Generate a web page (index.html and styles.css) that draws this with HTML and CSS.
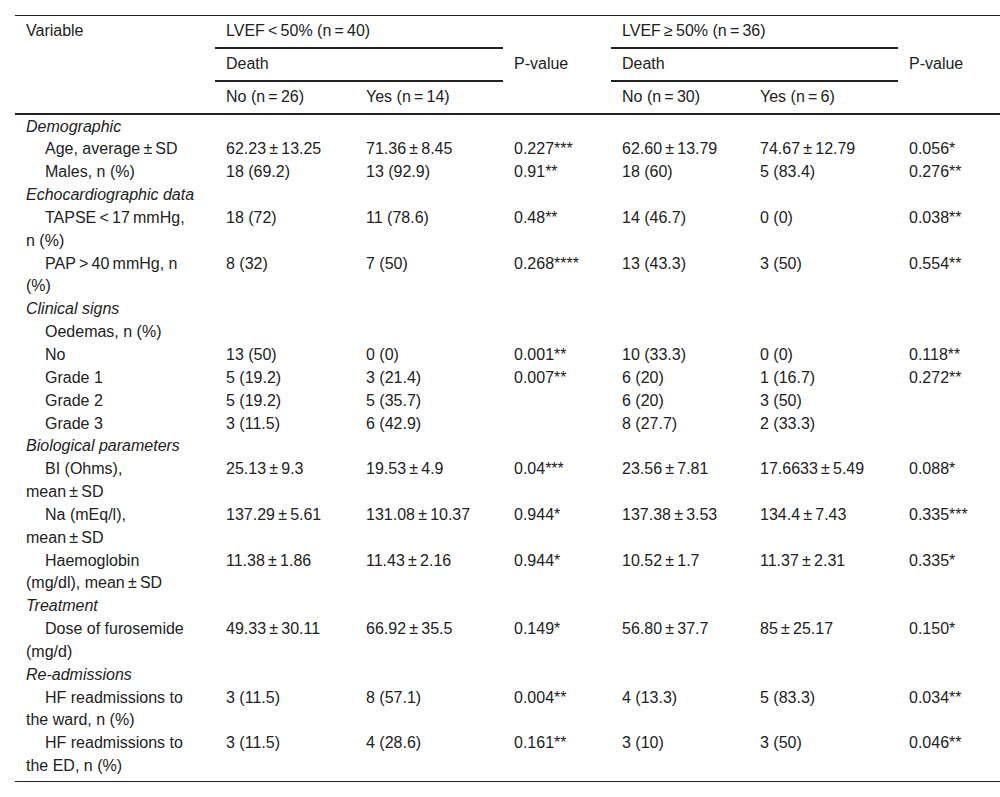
FILE: index.html
```html
<!DOCTYPE html>
<html lang="en">
<head>
<meta charset="utf-8">
<title>LVEF table</title>
<link rel="stylesheet" href="styles.css">
</head>
<body>
<div class="page">
<table class="data">
  <colgroup>
    <col class="c1"><col class="c2"><col class="c3"><col class="c4"><col class="c5"><col class="c6"><col class="c7">
  </colgroup>
  <thead>
    <tr>
      <th rowspan="3" class="var top">Variable</th>
      <th colspan="2" class="span">LVEF&thinsp;&lt;&thinsp;50% (n&thinsp;=&thinsp;40)</th>
      <th rowspan="3" class="pv">P-value</th>
      <th colspan="2" class="span">LVEF&thinsp;≥&thinsp;50% (n&thinsp;=&thinsp;36)</th>
      <th rowspan="3" class="pv">P-value</th>
    </tr>
    <tr>
      <th colspan="2" class="span">Death</th>
      <th colspan="2" class="span">Death</th>
    </tr>
    <tr class="last">
      <th>No (n&thinsp;=&thinsp;26)</th>
      <th>Yes (n&thinsp;=&thinsp;14)</th>
      <th>No (n&thinsp;=&thinsp;30)</th>
      <th>Yes (n&thinsp;=&thinsp;6)</th>
    </tr>
  </thead>
  <tbody>
    <tr><td colspan="7" class="cat">Demographic</td></tr>
    <tr><td class="var sub">Age, average&thinsp;±&thinsp;SD</td><td>62.23&thinsp;±&thinsp;13.25</td><td>71.36&thinsp;±&thinsp;8.45</td><td>0.227***</td><td>62.60&thinsp;±&thinsp;13.79</td><td>74.67&thinsp;±&thinsp;12.79</td><td>0.056*</td></tr>
    <tr><td class="var sub">Males, n (%)</td><td>18 (69.2)</td><td>13 (92.9)</td><td>0.91**</td><td>18 (60)</td><td>5 (83.4)</td><td>0.276**</td></tr>
    <tr><td colspan="7" class="cat">Echocardiographic data</td></tr>
    <tr><td class="var sub">TAPSE&thinsp;&lt;&thinsp;17&thinsp;mmHg, n (%)</td><td>18 (72)</td><td>11 (78.6)</td><td>0.48**</td><td>14 (46.7)</td><td>0 (0)</td><td>0.038**</td></tr>
    <tr><td class="var sub">PAP&thinsp;&gt;&thinsp;40&thinsp;mmHg, n (%)</td><td>8 (32)</td><td>7 (50)</td><td>0.268****</td><td>13 (43.3)</td><td>3 (50)</td><td>0.554**</td></tr>
    <tr><td colspan="7" class="cat">Clinical signs</td></tr>
    <tr><td class="var sub">Oedemas, n (%)</td><td></td><td></td><td></td><td></td><td></td><td></td></tr>
    <tr><td class="var sub">No</td><td>13 (50)</td><td>0 (0)</td><td>0.001**</td><td>10 (33.3)</td><td>0 (0)</td><td>0.118**</td></tr>
    <tr><td class="var sub">Grade 1</td><td>5 (19.2)</td><td>3 (21.4)</td><td>0.007**</td><td>6 (20)</td><td>1 (16.7)</td><td>0.272**</td></tr>
    <tr><td class="var sub">Grade 2</td><td>5 (19.2)</td><td>5 (35.7)</td><td></td><td>6 (20)</td><td>3 (50)</td><td></td></tr>
    <tr><td class="var sub">Grade 3</td><td>3 (11.5)</td><td>6 (42.9)</td><td></td><td>8 (27.7)</td><td>2 (33.3)</td><td></td></tr>
    <tr><td colspan="7" class="cat">Biological parameters</td></tr>
    <tr><td class="var sub">BI (Ohms), <span class="nw">mean&thinsp;±&thinsp;SD</span></td><td>25.13&thinsp;±&thinsp;9.3</td><td>19.53&thinsp;±&thinsp;4.9</td><td>0.04***</td><td>23.56&thinsp;±&thinsp;7.81</td><td>17.6633&thinsp;±&thinsp;5.49</td><td>0.088*</td></tr>
    <tr><td class="var sub">Na (mEq/l), <span class="nw">mean&thinsp;±&thinsp;SD</span></td><td>137.29&thinsp;±&thinsp;5.61</td><td>131.08&thinsp;±&thinsp;10.37</td><td>0.944*</td><td>137.38&thinsp;±&thinsp;3.53</td><td>134.4&thinsp;±&thinsp;7.43</td><td>0.335***</td></tr>
    <tr><td class="var sub">Haemoglobin <span class="nw">(mg/dl), mean&thinsp;±&thinsp;SD</span></td><td>11.38&thinsp;±&thinsp;1.86</td><td>11.43&thinsp;±&thinsp;2.16</td><td>0.944*</td><td>10.52&thinsp;±&thinsp;1.7</td><td>11.37&thinsp;±&thinsp;2.31</td><td>0.335*</td></tr>
    <tr><td colspan="7" class="cat">Treatment</td></tr>
    <tr><td class="var sub">Dose of furosemide (mg/d)</td><td>49.33&thinsp;±&thinsp;30.11</td><td>66.92&thinsp;±&thinsp;35.5</td><td>0.149*</td><td>56.80&thinsp;±&thinsp;37.7</td><td>85&thinsp;±&thinsp;25.17</td><td>0.150*</td></tr>
    <tr><td colspan="7" class="cat">Re-admissions</td></tr>
    <tr><td class="var sub">HF readmissions to the ward, n (%)</td><td>3 (11.5)</td><td>8 (57.1)</td><td>0.004**</td><td>4 (13.3)</td><td>5 (83.3)</td><td>0.034**</td></tr>
    <tr><td class="var sub">HF readmissions to the ED, n (%)</td><td>3 (11.5)</td><td>4 (28.6)</td><td>0.161**</td><td>3 (10)</td><td>3 (50)</td><td>0.046**</td></tr>
  </tbody>
</table>
</div>
</body>
</html>
```
FILE: styles.css
```css
html, body {
  margin: 0;
  padding: 0;
  background: #ffffff;
}

.page {
  padding: 15px 0 0 15px;
}

.data {
  width: 985px;
  table-layout: fixed;
  border-collapse: collapse;
  font-family: "Liberation Sans", Arial, sans-serif;
  font-size: 16px;
  line-height: 22.85px;
  color: #222222;
  border-top: 1px solid #222222;
  border-bottom: 1px solid #222222;
}

.c1 { width: 200px; }
.c2 { width: 140px; }
.c3 { width: 148px; }
.c4 { width: 108px; }
.c5 { width: 138px; }
.c6 { width: 149px; }
.c7 { width: 102px; }

.data th {
  font-weight: normal;
  text-align: left;
  padding: 4px 11px;
  vertical-align: top;
  white-space: nowrap;
}

.data th.span {
  border-bottom: 2px solid #222222;
}

.data th.pv {
  vertical-align: middle;
  border-bottom: 2px solid #222222;
}

.data th.var {
  border-bottom: 2px solid #222222;
}

.data tr.last th {
  border-bottom: 2px solid #222222;
}

.data td {
  padding: 0 11px;
  vertical-align: top;
  text-align: left;
  white-space: nowrap;
}

.data td.var {
  white-space: normal;
  padding-right: 22px;
}

.data td.sub {
  text-indent: 19px;
}

.data td.cat {
  font-style: italic;
}

.data tbody tr:first-child td {
  padding-top: 1px;
}

.data tbody tr:last-child td {
  padding-bottom: 3px;
}

.nw {
  white-space: nowrap;
}
```
